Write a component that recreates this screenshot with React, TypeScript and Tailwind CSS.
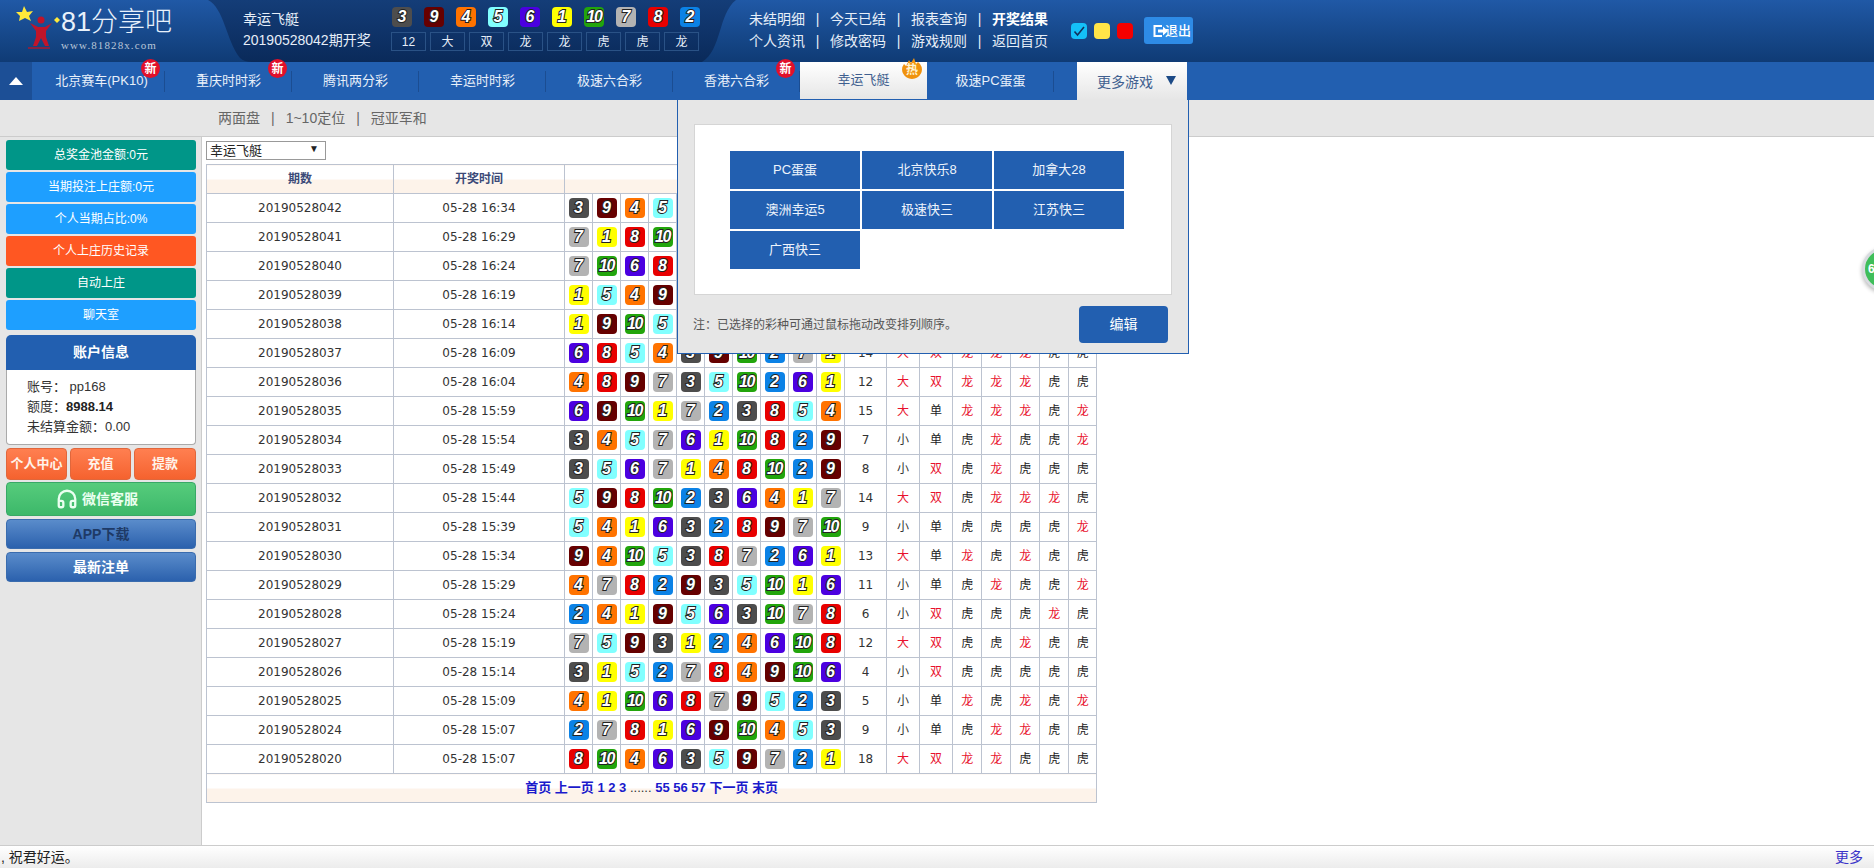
import { Headphones } from "lucide-react";

const BALL: Record<number, string> = {
  1: "bg-[#ffff00]",
  2: "bg-[#0b82e6]",
  3: "bg-[#4d4d4d]",
  4: "bg-[#ff7300]",
  5: "bg-[#81ffff]",
  6: "bg-[#4b00e0]",
  7: "bg-[#b3b3b3]",
  8: "bg-[#e80000]",
  9: "bg-[#660000]",
  10: "bg-[#22a50c]",
};

const ROWS: [string, string, number[], number, string, string, string][] = [
  ["20190528042", "05-28 16:34", [3, 9, 4, 5, 6, 1, 10, 7, 8, 2], 12, "大", "双", "龙龙虎虎龙"],
  ["20190528041", "05-28 16:29", [7, 1, 8, 10, 3, 9, 4, 5, 6, 2], 8, "小", "双", "龙虎龙龙虎"],
  ["20190528040", "05-28 16:24", [7, 10, 6, 8, 1, 3, 5, 2, 9, 4], 17, "大", "单", "龙龙虎龙虎"],
  ["20190528039", "05-28 16:19", [1, 5, 4, 9, 7, 8, 2, 10, 3, 6], 6, "小", "双", "虎虎虎龙虎"],
  ["20190528038", "05-28 16:14", [1, 9, 10, 5, 4, 2, 6, 3, 8, 7], 10, "小", "双", "虎龙龙虎虎"],
  ["20190528037", "05-28 16:09", [6, 8, 5, 4, 3, 9, 10, 2, 7, 1], 14, "大", "双", "龙龙龙虎虎"],
  ["20190528036", "05-28 16:04", [4, 8, 9, 7, 3, 5, 10, 2, 6, 1], 12, "大", "双", "龙龙龙虎虎"],
  ["20190528035", "05-28 15:59", [6, 9, 10, 1, 7, 2, 3, 8, 5, 4], 15, "大", "单", "龙龙龙虎龙"],
  ["20190528034", "05-28 15:54", [3, 4, 5, 7, 6, 1, 10, 8, 2, 9], 7, "小", "单", "虎龙虎虎龙"],
  ["20190528033", "05-28 15:49", [3, 5, 6, 7, 1, 4, 8, 10, 2, 9], 8, "小", "双", "虎龙虎虎虎"],
  ["20190528032", "05-28 15:44", [5, 9, 8, 10, 2, 3, 6, 4, 1, 7], 14, "大", "双", "虎龙龙龙虎"],
  ["20190528031", "05-28 15:39", [5, 4, 1, 6, 3, 2, 8, 9, 7, 10], 9, "小", "单", "虎虎虎虎龙"],
  ["20190528030", "05-28 15:34", [9, 4, 10, 5, 3, 8, 7, 2, 6, 1], 13, "大", "单", "龙虎龙虎虎"],
  ["20190528029", "05-28 15:29", [4, 7, 8, 2, 9, 3, 5, 10, 1, 6], 11, "小", "单", "虎龙虎虎龙"],
  ["20190528028", "05-28 15:24", [2, 4, 1, 9, 5, 6, 3, 10, 7, 8], 6, "小", "双", "虎虎虎龙虎"],
  ["20190528027", "05-28 15:19", [7, 5, 9, 3, 1, 2, 4, 6, 10, 8], 12, "大", "双", "虎虎龙虎虎"],
  ["20190528026", "05-28 15:14", [3, 1, 5, 2, 7, 8, 4, 9, 10, 6], 4, "小", "双", "虎虎虎虎虎"],
  ["20190528025", "05-28 15:09", [4, 1, 10, 6, 8, 7, 9, 5, 2, 3], 5, "小", "单", "龙虎龙虎龙"],
  ["20190528024", "05-28 15:07", [2, 7, 8, 1, 6, 9, 10, 4, 5, 3], 9, "小", "单", "虎龙龙虎虎"],
  ["20190528020", "05-28 15:07", [8, 10, 4, 6, 3, 5, 9, 7, 2, 1], 18, "大", "双", "龙龙虎虎虎"],
];

const TABS = [
  { name: "北京赛车(PK10)", badge: "新" },
  { name: "重庆时时彩", badge: "新" },
  { name: "腾讯两分彩" },
  { name: "幸运时时彩" },
  { name: "极速六合彩" },
  { name: "香港六合彩", badge: "新" },
  { name: "幸运飞艇", badge: "热", active: true },
  { name: "极速PC蛋蛋" },
];

function Ball({ n }: { n: number }) {
  return (
    <span
      className={`flex h-5 w-5 items-center justify-center rounded-[4px] text-[16px] leading-none font-bold italic text-white [font-family:'Liberation_Sans',sans-serif] [-webkit-text-stroke:2px_#222] [paint-order:stroke_fill] ${
        n === 10 ? "tracking-[-1.5px]" : ""
      } ${BALL[n]}`}
    >
      {n}
    </span>
  );
}

function Logo() {
  return (
    <svg width="60" height="52" viewBox="0 0 60 52" className="shrink-0">
      <polygon points="24,6 27,12 33,11 29,16 31,21 25,18 19,21 20,16 16,12 22,12" fill="#ffe93a" />
      <polygon points="57,17 60,20 57,23 54,20" fill="#ffe93a" />
      <circle cx="41" cy="20" r="3.5" fill="#c0142a" />
      <path d="M30 23 L38 27 L45 27 L52 23 L46 31 L46 37 L49 46 L45 46 L41 38 L37 46 L33 46 L36 37 L36 31 Z" fill="#c0142a" />
      <path d="M28 48 H50" stroke="#a81830" strokeWidth="1.5" />
    </svg>
  );
}

function Header() {
  const links = [
    ["未结明细", "今天已结", "报表查询", "开奖结果"],
    ["个人资讯", "修改密码", "游戏规则", "返回首页"],
  ];
  return (
    <header className="relative flex h-[62px] bg-gradient-to-b from-[#2059a6] to-[#0f3b75] text-white">
      {/* dark curved band behind the draw result */}
      <svg className="absolute top-0 left-[206px]" width="532" height="62" viewBox="0 0 532 62">
        <defs>
          <linearGradient id="band" x1="0" y1="0" x2="0" y2="1">
            <stop offset="0" stopColor="#143d78" />
            <stop offset="1" stopColor="#0a2a5a" />
          </linearGradient>
        </defs>
        <path d="M2 0 C 18 8, 20 40, 34 58 Q 38 62, 46 62 L 496 62 C 516 50, 512 14, 530 0 Z" fill="url(#band)" />
      </svg>

      <div className="relative flex w-[243px] shrink-0">
        <Logo />
        <div className="pt-[7px] pl-[1px]">
          <div className="text-[27px] leading-[30px] font-light whitespace-nowrap text-[#e8f1fb]">81分享吧</div>
          <div className="mt-[2px] text-[11px] leading-3 tracking-[1.1px] whitespace-nowrap text-[#b9c6d8] [font-family:'Liberation_Serif',serif]">
            www.81828x.com
          </div>
        </div>
      </div>

      <div className="relative flex w-[148px] shrink-0 flex-col pt-[9px] text-[14px] leading-[21px] text-[#e6eef8]">
        <span>幸运飞艇</span>
        <span>20190528042期开奖</span>
      </div>

      <div className="relative w-[358px] shrink-0 pt-[7px]">
        <div className="ml-px flex gap-3">
          {ROWS[0][2].map((n, i) => (
            <Ball key={i} n={n} />
          ))}
        </div>
        <div className="mt-[5px] flex gap-1">
          {["12", "大", "双", "龙", "龙", "虎", "虎", "龙"].map((t, i) => (
            <span
              key={i}
              className="flex h-[19px] w-[35px] items-center justify-center border border-[#2a5286] text-[12px] text-[#e6eef8]"
            >
              {t}
            </span>
          ))}
        </div>
      </div>

      <div className="relative flex w-[300px] shrink-0 flex-col pt-[8px] text-[14px] leading-[22px] text-[#e6eef8]">
        {links.map((row, r) => (
          <div key={r} className="flex">
            {row.map((t, i) => (
              <div key={t} className="flex">
                {i > 0 && <span className="w-[25px] text-center">|</span>}
                <span className={r === 0 && i === 3 ? "font-bold text-white" : ""}>{t}</span>
              </div>
            ))}
          </div>
        ))}
      </div>

      <div className="relative ml-[22px] flex items-start gap-[7px] pt-[23px]">
        <span className="flex h-4 w-4 items-center justify-center rounded-sm bg-[#14c0f8]">
          <svg width="12" height="12" viewBox="0 0 12 12">
            <path d="M1.5 6.5 L4.5 10 L11 2" fill="none" stroke="#12305c" strokeWidth="1.6" />
          </svg>
        </span>
        <span className="h-4 w-4 rounded-sm bg-[#ffe548]" />
        <span className="h-4 w-4 rounded-sm bg-[#f50000]" />
      </div>
      <div className="relative ml-[11px] pt-[17px]">
        <div className="flex h-[27px] w-[49px] items-center rounded-[3px] bg-[#2e8be6] pl-[9px] text-[13px] font-medium text-white">
          <svg width="15" height="14" viewBox="0 0 15 14" className="-mr-[3px] shrink-0">
            <path d="M9 2 H1.5 V12 H9" fill="none" stroke="#fff" strokeWidth="2" />
            <path d="M5 5.5 H10 V2.5 L15 7 L10 11.5 V8.5 H5 Z" fill="#fff" />
          </svg>
          <span className="whitespace-nowrap">退出</span>
        </div>
      </div>
    </header>
  );
}

function HotBadge() {
  return (
    <span className="absolute top-[-4px] right-[5px] flex h-[21px] w-5 items-end justify-center">
      <svg width="20" height="21" viewBox="0 0 20 21" className="absolute inset-0">
        <path d="M10 21 A 10 9.5 0 0 1 2 6 L4 8 L7 2 L9 5 L12 0 L14 6 L16 4 L18 6 A 10 9.5 0 0 1 10 21 Z" fill="#f0920e" />
      </svg>
      <span className="relative text-[12px] leading-[17px] font-bold text-[#fff3d0]">热</span>
    </span>
  );
}

function Nav() {
  return (
    <nav className="flex h-[38px] bg-[#225fb0] text-[13px] text-[#e8f0fa]">
      <div className="flex w-[32px] items-center justify-center bg-[#1c4f96]">
        <svg width="14" height="8" viewBox="0 0 14 8" className="-mt-[1px]">
          <polygon points="7,0 14,8 0,8" fill="#fff" />
        </svg>
      </div>
      <div className="w-[6px]" />
      {TABS.map((t) => (
        <div
          key={t.name}
          className={`relative flex w-[127px] items-center justify-center ${
            t.active
              ? "border-b border-[#225fb0] bg-gradient-to-b from-white to-[#e6e6e6] text-[#3f5f8f]"
              : "after:absolute after:top-[9px] after:right-0 after:h-[21px] after:w-px after:bg-[#1b4d92]"
          }`}
        >
          <span className="-mt-px whitespace-nowrap">{t.name}</span>
          {t.badge === "新" && (
            <span className="absolute top-[-3px] right-[5px] flex h-[19px] w-[19px] items-center justify-center rounded-full bg-[#e2102a] text-[12px] font-bold text-white">
              新
            </span>
          )}
          {t.badge === "热" && <HotBadge />}
        </div>
      ))}
      <div className="w-[23px]" />
      <div className="relative flex w-[110px] items-center bg-gradient-to-b from-white to-[#e6e6e6] pl-[20px] text-[14px] text-[#3f5f8f]">
        <span className="mt-[2px]">更多游戏</span>
        <svg width="10" height="9" viewBox="0 0 10 9" className="absolute top-[14px] left-[89px]">
          <polygon points="0,0 10,0 5,9" fill="#1c4a86" />
        </svg>
      </div>
    </nav>
  );
}

function Sidebar() {
  const bar = "flex h-[30px] items-center justify-center rounded-[3px] text-[12px] text-white";
  const orange =
    "flex h-[32px] items-center justify-center rounded-[4px] border border-[#e0673c] bg-gradient-to-b from-[#ff7f50] to-[#f5622e] text-[13px] font-bold text-[#fff3ea]";
  const blue =
    "flex h-[30px] items-center justify-center rounded-[4px] border border-[#3a6cae] bg-gradient-to-b from-[#5a8ccb] to-[#2b61ad] text-[14px] font-bold";
  return (
    <aside className="flex w-[201px] shrink-0 flex-col bg-[#e6e6e6] pt-[3px] pl-[6px]">
      <div className="flex w-[190px] flex-col gap-[2px]">
        <div className={`${bar} bg-[#009688]`}>总奖金池金额:0元</div>
        <div className={`${bar} bg-[#1e9fff]`}>当期投注上庄额:0元</div>
        <div className={`${bar} bg-[#1e9fff]`}>个人当期占比:0%</div>
        <div className={`${bar} bg-[#ff5722]`}>个人上庄历史记录</div>
        <div className={`${bar} bg-[#009688]`}>自动上庄</div>
        <div className={`${bar} bg-[#1e9fff]`}>聊天室</div>
      </div>
      <div className="mt-[5px] w-[190px]">
        <div className="flex h-[35px] items-center justify-center rounded-t-[5px] bg-[#225fb0] text-[14px] font-bold text-white">
          账户信息
        </div>
        <div className="h-[75px] rounded-b-[4px] border border-t-0 border-[#aaa] bg-white pt-[7px] pl-[20px] text-[13px] leading-[20px] text-[#333]">
          <div>账号： pp168</div>
          <div>
            额度：<span className="font-bold text-[#222]">8988.14</span>
          </div>
          <div>未结算金额：0.00</div>
        </div>
      </div>
      <div className="mt-[3px] flex w-[190px] gap-[3px]">
        <div className={`${orange} w-[61px]`}>个人中心</div>
        <div className={`${orange} w-[61px]`}>充值</div>
        <div className={`${orange} w-[62px]`}>提款</div>
      </div>
      <div className="mt-[2px] flex h-[34px] w-[190px] items-center justify-center gap-[4px] rounded-[4px] border border-[#38a866] bg-gradient-to-b from-[#56cc7c] to-[#3cb86a] pr-[8px] text-[14px] font-bold text-[#eafff0]">
        <Headphones size={22} strokeWidth={2.5} />
        <span>微信客服</span>
      </div>
      <div className={`${blue} mt-[3px] w-[190px] text-[#1e3a66]`}>APP下载</div>
      <div className={`${blue} mt-[3px] w-[190px] text-white`}>最新注单</div>
    </aside>
  );
}

function ResultTable() {
  const cell = "border border-[#bcc3d0] text-center p-0";
  const cream = "bg-gradient-to-b from-white from-50% to-[#fdf3ea] to-50%";
  return (
    <table className="w-[890px] table-fixed border-collapse text-[12px] text-[#333] [font-family:'DejaVu_Sans','Noto_Sans_CJK_SC',sans-serif]">
      <colgroup>
        <col className="w-[187px]" />
        <col className="w-[171px]" />
        {ROWS[0][2].map((_, i) => (
          <col key={i} className="w-[28px]" />
        ))}
        <col className="w-[42px]" />
        <col className="w-[33px]" />
        <col className="w-[33px]" />
        <col className="w-[29px]" />
        <col className="w-[29px]" />
        <col className="w-[29px]" />
        <col className="w-[29px]" />
        <col className="w-[28px]" />
      </colgroup>
      <thead>
        <tr className="h-[29px] text-[12px] font-bold text-[#3c4a78]">
          <th className={`${cell} ${cream}`}>期数</th>
          <th className={`${cell} ${cream}`}>开奖时间</th>
          <th colSpan={10} className={`${cell} ${cream}`}>开奖号码</th>
          <th colSpan={3} className={`${cell} ${cream}`}>冠亚军和</th>
          <th colSpan={5} className={`${cell} ${cream}`}>1~5龙虎</th>
        </tr>
      </thead>
      <tbody>
        {ROWS.map(([issue, time, balls, sum, size, odd, dragons]) => (
          <tr key={issue} className="h-[29px]">
            <td className={cell}>{issue}</td>
            <td className={cell}>{time}</td>
            {balls.map((n, i) => (
              <td key={i} className={cell}>
                <div className="flex justify-center">
                  <Ball n={n} />
                </div>
              </td>
            ))}
            <td className={cell}>{sum}</td>
            <td className={`${cell} ${size === "大" ? "text-[#e8112d]" : "text-[#333]"}`}>{size}</td>
            <td className={`${cell} ${odd === "双" ? "text-[#e8112d]" : "text-[#222]"}`}>{odd}</td>
            {dragons.split("").map((d, i) => (
              <td key={i} className={`${cell} ${d === "龙" ? "text-[#e8112d]" : "text-[#222]"}`}>
                {d}
              </td>
            ))}
          </tr>
        ))}
        <tr className="h-[29px]">
          <td colSpan={20} className={`${cell} ${cream} text-[13px] font-bold text-[#1a1acc] [font-family:'Liberation_Sans','Noto_Sans_CJK_SC',sans-serif]`}>
            首页 上一页 1 2 3 <span className="font-normal text-[#333]">......</span> 55 56 57 下一页 末页
          </td>
        </tr>
      </tbody>
    </table>
  );
}

function MoreGames() {
  const games = ["PC蛋蛋", "北京快乐8", "加拿大28", "澳洲幸运5", "极速快三", "江苏快三", "广西快三"];
  return (
    <div className="absolute top-[100px] left-[677px] h-[254px] w-[512px] border border-t-0 border-[#225fb0] bg-[#e6e6e6]">
      <div className="mx-[16px] mt-[24px] h-[171px] border border-[#d5d5d5] bg-white pt-[26px] pl-[35px]">
        <div className="grid w-[394px] grid-cols-[130px_130px_130px] gap-[2px]">
          {games.map((g) => (
            <div key={g} className="flex h-[38px] items-center justify-center bg-[#225fb0] text-[13px] text-[#eef4fc]">
              {g}
            </div>
          ))}
        </div>
      </div>
      <div className="mt-[11px] flex items-center justify-between pr-[20px] pl-[15px]">
        <span className="text-[12px] text-[#555]">注：已选择的彩种可通过鼠标拖动改变排列顺序。</span>
        <div className="flex h-[37px] w-[89px] items-center justify-center rounded-[4px] bg-[#225fb0] text-[14px] text-white">
          编辑
        </div>
      </div>
    </div>
  );
}

export default function App() {
  return (
    <div className="relative flex h-[868px] w-[1874px] flex-col overflow-hidden bg-white [font-family:'Liberation_Sans','Noto_Sans_CJK_SC',sans-serif]">
      <Header />
      <Nav />
      <div className="flex h-[37px] items-center border-b border-[#ccc] bg-[#e6e6e6] pl-[218px] text-[14px] text-[#666]">
        <span>两面盘</span>
        <span className="mx-[11px]">|</span>
        <span>1~10定位</span>
        <span className="mx-[11px]">|</span>
        <span>冠亚军和</span>
      </div>
      <div className="flex flex-1">
        <Sidebar />
        <main className="flex-1 border-l border-[#ccc] pt-[4px] pl-[4px]">
          <div className="relative flex h-[19px] w-[120px] items-center border border-[#999] pl-[3px] text-[13px] leading-none text-[#222]">
            幸运飞艇
            <span className="absolute top-[2px] right-[6px] text-[10px]">▼</span>
          </div>
          <div className="mt-[4px]">
            <ResultTable />
          </div>
        </main>
      </div>
      <footer className="flex h-[23px] items-center justify-between border-t border-[#ccc] bg-gradient-to-b from-white to-[#ececec] pr-[11px] pl-[1px] text-[14px] text-[#222]">
        <span>, 祝君好运。</span>
        <span className="text-[#3a33c8]">更多</span>
      </footer>

      <MoreGames />

      {/* floating chat bubble, cut off by the window edge */}
      <div className="absolute top-[247px] left-[1862px] flex h-[44px] w-[44px] items-center rounded-full border-[3px] border-[#d8dbe0] bg-[#3fbe5a] pl-[3px] text-[12px] font-bold text-white shadow-[0_2px_4px_rgba(0,0,0,0.3)]">
        6
      </div>
    </div>
  );
}
